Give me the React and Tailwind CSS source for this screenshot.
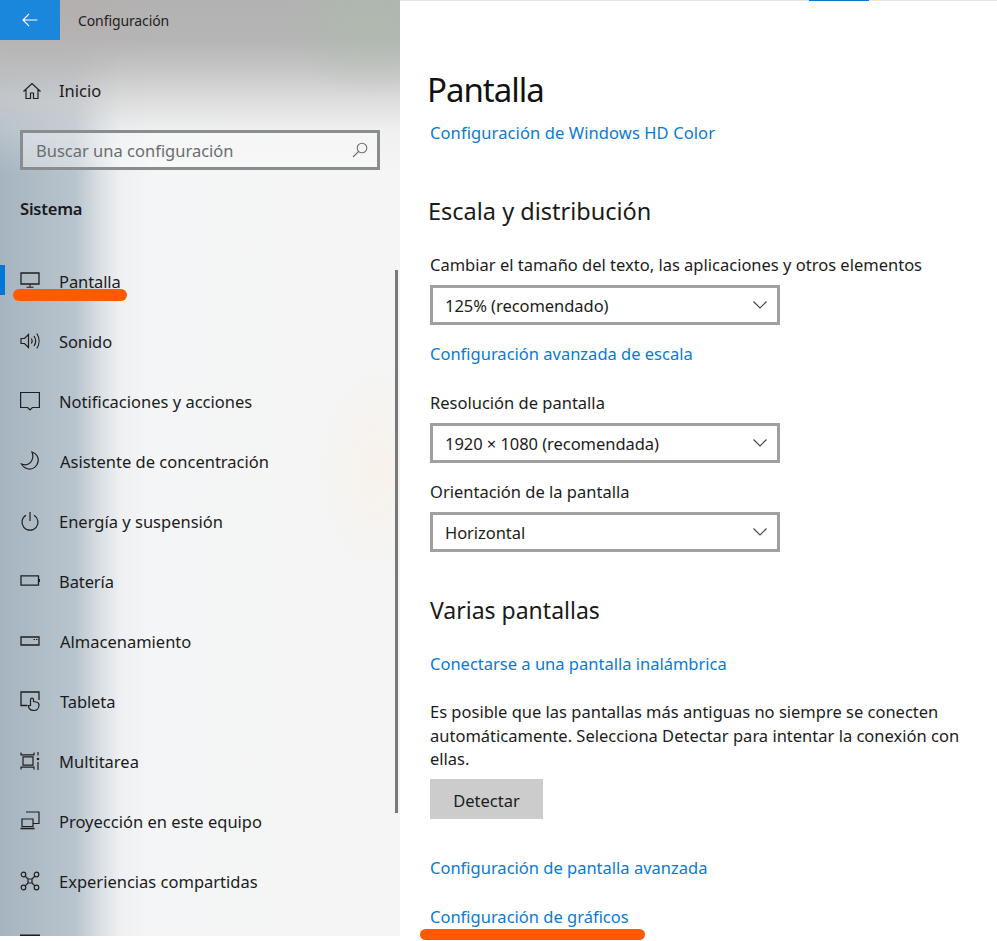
const S = ({ children, className = "w-[20px] h-[20px]", vb = "0 0 20 20" }) => (
  <svg viewBox={vb} className={className} fill="none" stroke="#1f1f1f" strokeWidth="1.2">{children}</svg>
);

const Back = () => (
  <svg viewBox="0 0 16 14" className="w-[16px] h-[14px]" fill="none" stroke="#ffffff" strokeWidth="1.2">
    <path d="M15.5 7H1M7 1 1 7l6 6" />
  </svg>
);
const Home = () => (
  <S><path d="M1.5 10.5 10 2.5l8.500 8M4 9v8.500h4.500V12h3v5.500H16V9" /></S>
);
const Search = () => (
  <svg viewBox="0 0 16 16" className="w-[16px] h-[16px]" fill="none" stroke="#6b6f72" strokeWidth="1.1">
    <circle cx="10" cy="6" r="4.800" /><path d="M6.500 9.500 1 15" />
  </svg>
);
const Chevron = () => (
  <svg viewBox="0 0 14 8" className="w-[14px] h-[8px]" fill="none" stroke="#444444" strokeWidth="1.1">
    <path d="M.5.5 7 7 13.500.5" />
  </svg>
);

const icons = {
  display: <S><path d="M1 2h18v11H1z" strokeWidth="1.300" /><path d="M10 13.500V16M6.500 16.300h7" strokeWidth="1.100" /></S>,
  sound: <S><path d="M1 7.500h3.500L8.500 3.500v13l-4-4H1zM11.300 7.500c1 1.500 1 3.500 0 5M14 5c2 3 2 7 0 10M16.800 2.500c3 4.500 3 10.500 0 15" /></S>,
  notif: <S><path d="M.6 1.500h18.800v15h-7L10 19l-2.400-2.500h-7z" /></S>,
  moon: <S><path d="M12 1c5 1.500 7 6 6 10-1 4.500-5 7.500-9 7-3-.3-6-2.300-7.500-5 4 1.500 8 .3 10-3 1.700-3 1.700-6 .5-9z" /></S>,
  power: <S><path d="M10 1v9M6 4.200a8 8 0 1 0 8 0" /></S>,
  battery: <S><path d="M1 4.800h17.500v9.400H1zM19.400 8v3" strokeWidth="1.300" /></S>,
  storage: <S><path d="M1 6h18v8H1z" strokeWidth="1.300" /><path d="M13.500 8.500h1.500M16 8.500h1.500" /></S>,
  tablet: <S><path d="M7.500 14.500H1V1h18v8" strokeWidth="1.300" /><path d="M10.500 14.500V8.500c0-1.800 3-1.800 3 0V10.500l2.800.5c2 .4 2.700 1.400 2.700 3 0 3-2 5.500-4.800 5.500-3.500 0-5.700-2-5.700-5z" fill="none" /></S>,
  multi: <S><path d="M1 1.500v2.300h13V1.500M3 5.800h10v8.400H3zM1 18.500v-2.300h13v2.300M18 1v3.500M18 11v8" /><circle cx="18" cy="8" r="1.300" fill="#1f1f1f" stroke="none" /></S>,
  project: <S><path d="M6 1h13v11.500h-5.500M2 8h11v7.500H2z" strokeWidth="1.200" /><path d="M.5 17.500h14" strokeWidth="1.600" /></S>,
  share: <S><circle cx="3.500" cy="3.500" r="2.300" /><circle cx="16.500" cy="3.500" r="2.300" /><circle cx="3.500" cy="16.500" r="2.300" /><circle cx="16.500" cy="16.500" r="2.300" /><path d="M8 8h4v4H8zM5.200 5.200 8 8M14.800 5.200 12 8M5.200 14.800 8 12M14.800 14.800 12 12" /></S>,
  remote: <S><path d="M0 4.500h20" strokeWidth="2" /></S>,
};

const items = [
  ["display", "Pantalla", "ml-[19px] mt-[2px] tracking-[-0.1px]"],
  ["sound", "Sonido", "ml-[19px] mt-[2px] tracking-[-0.1px]"],
  ["notif", "Notificaciones y acciones", "ml-[19px] mt-[2px]"],
  ["moon", "Asistente de concentración", "ml-[20px] mt-[2px]"],
  ["power", "Energía y suspensión", "ml-[19px] mt-[2px]"],
  ["battery", "Batería", "ml-[19px] mt-[2px] tracking-[-0.1px]"],
  ["storage", "Almacenamiento", "ml-[20px] mt-[2px]"],
  ["tablet", "Tableta", "ml-[20px] mt-[2px] tracking-[-0.1px]"],
  ["multi", "Multitarea", "ml-[19px] mt-[2px]"],
  ["project", "Proyección en este equipo", "ml-[19px] mt-[2px]"],
  ["share", "Experiencias compartidas", "ml-[19px] mt-[2px]"],
  ["remote", "Escritorio remoto", "ml-[19px] mt-[6px]"],
];

const NavItem = ({ icon, label, ml, active }) => (
  <div className="relative flex h-[60px] shrink-0 items-center pl-[20px] text-[16.5px] leading-[24px] text-[#1c1c1c]">
    {active && <div className="absolute left-0 top-[14px] h-[30px] w-[5px] bg-[#0078d7]" />}
    {icons[icon]}
    <span className={ml}>{label}</span>
    {active && <div className="absolute left-[13px] top-[38px] h-[12px] w-[114px] rounded-full bg-[#ff5a00]" />}
  </div>
);

const Select = ({ value, className }) => (
  <div className={`flex h-[40px] w-[350px] items-center justify-between border-[3px] border-[#a0a0a0] pl-[12px] pr-[10px] text-[16.5px] tracking-[-0.05px] text-[#1c1c1c] ${className}`}>
    <span className="mt-[2px]">{value}</span>
    <Chevron />
  </div>
);

const A = ({ children, className }) => (
  <div className={`h-[24px] text-[16.5px] leading-[24px] text-[#0a7ad4] ${className}`}>{children}</div>
);
const L = ({ children, className }) => (
  <div className={`h-[24px] text-[16.5px] leading-[24px] text-[#1c1c1c] ${className}`}>{children}</div>
);
const H = ({ children, className }) => (
  <div className={`h-[32px] leading-[32px] text-[#1a1a1a] ${className}`}>{children}</div>
);

export default function App() {
  return (
    <div className="flex h-[941px] w-[997px] overflow-hidden bg-white font-['Noto_Sans','Open_Sans',sans-serif]">
      <aside className="relative h-[936px] w-[400px] shrink-0 overflow-hidden bg-[radial-gradient(ellipse_90px_80px_at_370px_20px,rgba(170,190,170,0.5),rgba(170,190,170,0)),radial-gradient(ellipse_100px_70px_at_70px_10px,rgba(190,165,165,0.22),rgba(190,165,165,0)),radial-gradient(ellipse_60px_110px_at_375px_470px,rgba(250,238,225,0.5),rgba(250,238,225,0)),linear-gradient(180deg,#b2b2b2_0px,#b5b5b5_40px,rgba(190,190,190,0.85)_70px,rgba(208,208,208,0.65)_100px,rgba(228,229,230,0.3)_130px,rgba(243,244,245,0)_175px),linear-gradient(90deg,#a6b4bf_0px,#b8c4cd_75px,#d6dde2_97px,#eef0f2_120px,#f4f5f6_150px,#f5f5f5_100%)]">
        <div className="flex h-[40px] items-center">
          <div className="flex h-[40px] w-[60px] items-center justify-center bg-[#1a86dc]"><Back /></div>
          <span className="ml-[18px] text-[14px] tracking-[-0.1px] text-[#222222]">Configuración</span>
        </div>
        <div className="mt-[21px] flex h-[60px] items-center pl-[22px] text-[16.5px] text-[#1c1c1c]">
          <Home />
          <span className="ml-[17px]">Inicio</span>
        </div>
        <div className="ml-[20px] mt-[9px] flex h-[40px] w-[360px] items-center justify-between border-[3px] border-[#8a8d8f] bg-[rgba(255,255,255,0.35)] pl-[13px] pr-[9px] text-[16.5px] text-[#6a6d70]">
          <span className="mt-[2px]">Buscar una configuración</span>
          <Search />
        </div>
        <div className="ml-[20px] mt-[27px] h-[24px] text-[16.5px] font-semibold leading-[24px] tracking-[-0.2px] text-[#1a1a1a]">Sistema</div>
        <div className="mt-[30px] flex flex-col">
          {items.map(([icon, label, ml], i) => (
            <NavItem key={label} icon={icon} label={label} ml={ml} active={i === 0} />
          ))}
        </div>
        <div className="absolute left-[395px] top-[270px] h-[543px] w-[3px] bg-[#77797b]" />
      </aside>
      <main className="min-w-0 flex-1">
        <div className="flex h-px bg-[#e6e6e6]"><div className="ml-[409px] w-[60px] bg-[#0078d7]" /></div>
        <div className="pl-[30px] pr-[20px]">
          <div className="-ml-[3px] mt-[69px] h-[40px] text-[33px] leading-[40px] tracking-[-1px] text-[#111111]">Pantalla</div>
          <A className="mt-[11px] tracking-[0.1px]">Configuración de Windows HD Color</A>
          <H className="-ml-[2px] mt-[50px] text-[23.5px]">Escala y distribución</H>
          <L className="mt-[26px]">Cambiar el tamaño del texto, las aplicaciones y otros elementos</L>
          <Select value="125% (recomendado)" className="mt-[8px]" />
          <A className="mt-[17px]">Configuración avanzada de escala</A>
          <L className="mt-[25px]">Resolución de pantalla</L>
          <Select value="1920 × 1080 (recomendada)" className="mt-[8px]" />
          <L className="mt-[17px]">Orientación de la pantalla</L>
          <Select value="Horizontal" className="mt-[8px]" />
          <H className="mt-[42px] text-[23px]">Varias pantallas</H>
          <A className="mt-[26px]">Conectarse a una pantalla inalámbrica</A>
          <p className="mt-[24px] text-[16.5px] leading-[23.5px] text-[#1c1c1c]">
            Es posible que las pantallas más antiguas no siempre se conecten automáticamente. Selecciona Detectar para intentar la conexión con ellas.
          </p>
          <div className="mt-[8.5px] flex h-[40px] w-[113px] items-center justify-center bg-[#cccccc] text-[16.5px] text-[#1c1c1c]">
            <span className="mt-[5px]">Detectar</span>
          </div>
          <A className="mt-[37px]">Configuración de pantalla avanzada</A>
          <A className="mt-[25px]">Configuración de gráficos</A>
          <div className="-ml-[10px] h-[11px] w-[225px] rounded-full bg-[#ff5a00]" />
        </div>
      </main>
    </div>
  );
}
